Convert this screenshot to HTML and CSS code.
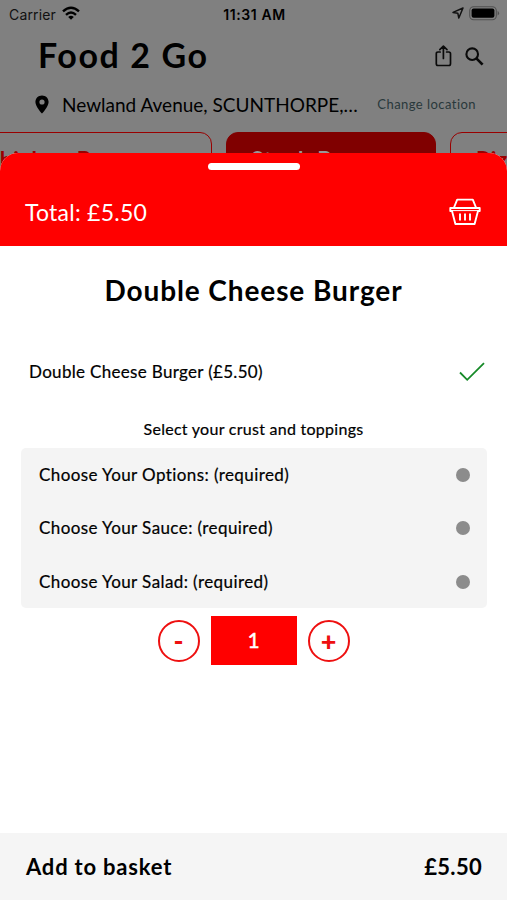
FILE: index.html
```html
<!DOCTYPE html>
<html lang="en">
<head>
<meta charset="utf-8">
<title>Food 2 Go</title>
<link rel="stylesheet" href="styles.css">
</head>
<body>
<div class="screen">
  <div class="backdrop">
    <div class="status">
      <div class="status-left"><span class="carrier">Carrier</span>
        <svg class="wifi" width="18" height="14" viewBox="0 0 18 14" fill="none" stroke="#000" stroke-width="2.4"><path d="M1 5.4Q9-1.9 17 5.4"/><path d="M4 8.8Q9 4.2 14 8.8"/><path d="M9 13.8 6.2 10.9Q9 8.8 11.8 10.9Z" fill="#000" stroke="none"/></svg>
      </div>
      <span class="time">11:31 AM</span>
      <div class="status-right">
        <svg width="12" height="12" viewBox="0 0 12 12" fill="none" stroke="#111" stroke-width="1.5" stroke-linejoin="round"><path d="M11 1 1 5.4 5.8 6.2 6.8 11Z"/></svg>
        <svg width="31" height="15" viewBox="0 0 31 15"><rect x=".7" y=".7" width="26.6" height="13" rx="4" fill="none" stroke="#505050" stroke-width="1.1"/><rect x="2.6" y="2.6" width="22.8" height="9.2" rx="2" fill="#000"/><path d="M28.6 4.8q3 2.4 0 4.8z" fill="#505050"/></svg>
      </div>
    </div>
    <div class="title-row">
      <h1>Food 2 Go</h1>
      <div class="actions">
        <svg width="17" height="22" viewBox="0 0 17 22" fill="none" stroke="#0a0a0a" stroke-width="1.7" stroke-linecap="round" stroke-linejoin="round"><path d="M5.2 7H3Q1.3 7 1.3 8.7V18.8Q1.3 20.5 3 20.5H13.8Q15.5 20.5 15.5 18.8V8.7Q15.5 7 13.8 7H11.6M8.4 13.5V1.4M4.8 4.6 8.4 1.2 12 4.6"/></svg>
        <svg width="19" height="19" viewBox="0 0 19 19" fill="none" stroke="#0a0a0a"><circle cx="7.2" cy="7.2" r="5.8" stroke-width="2.1"/><path d="M11.4 11.4 17.6 17.6" stroke-width="2.7"/></svg>
      </div>
    </div>
    <div class="location">
      <svg width="14" height="19" viewBox="0 0 14 19"><path fill="#000" fill-rule="evenodd" d="M7 .4C3.2.4.4 3.2.4 6.9.4 11.5 7 18.5 7 18.5S13.6 11.5 13.6 6.9C13.6 3.2 10.8.4 7 .4ZM7 4.4a2.6 2.6 0 1 1 0 5.2 2.6 2.6 0 0 1 0-5.2Z"/></svg>
      <span class="address">Newland Avenue, SCUNTHORPE,…</span>
      <span class="change">Change location</span>
    </div>
    <div class="tabs">
      <div class="tab tab-first">Chicken Burgers</div>
      <div class="tab tab-active">Steak Burgers</div>
      <div class="tab tab-last">Pizzas</div>
    </div>
  </div>
  <main class="sheet">
    <header class="sheet-head">
      <div class="grabber"></div>
      <div class="total-row">
        <span class="total">Total: £5.50</span>
        <svg width="32" height="28" viewBox="0 0 32 28" fill="none" stroke="#fff" stroke-width="1.9" stroke-linejoin="round"><path d="M5 9.5 8.2 1.6H23.8L27 9.5"/><path d="M1.3 10H30.7V13H29L25.6 26H6.4L3 13H1.3Z"/><path d="M3 12.6H29" stroke-width="1"/><path d="M11 15.5V22.5M16 15.5V22.5M21 15.5V22.5"/></svg>
      </div>
    </header>
    <h2>Double Cheese Burger</h2>
    <div class="variant"><span class="t-variant">Double Cheese Burger (£5.50)</span>
      <svg width="26" height="20" viewBox="0 0 26 20" fill="none" stroke="#168a28" stroke-width="1.8"><path d="M1 10.5 8.2 17.8 25 1.2"/></svg>
    </div>
    <p class="hint"><span class="t-hint">Select your crust and toppings</span></p>
    <div class="options">
      <div class="option"><span class="t-opt">Choose Your Options: (required)</span><i class="dot"></i></div>
      <div class="option"><span class="t-opt">Choose Your Sauce: (required)</span><i class="dot"></i></div>
      <div class="option"><span class="t-opt">Choose Your Salad: (required)</span><i class="dot"></i></div>
    </div>
    <div class="stepper">
      <button class="round">-</button>
      <div class="qty">1</div>
      <button class="round">+</button>
    </div>
    <footer class="basket"><span class="add">Add to basket</span><span class="price">£5.50</span></footer>
  </main>
</div>
</body>
</html>
```
FILE: styles.css
```css
* { box-sizing: border-box; }
body { margin: 0; font-family: Lato, "Liberation Sans", sans-serif; color: #000; }
h1, h2, p { margin: 0; }
svg { display: block; flex: none; }
span, h1, h2 { white-space: nowrap; }
.screen { width: 507px; height: 900px; overflow: hidden; background: #808080; display: flex; flex-direction: column; }
.backdrop { height: 153px; flex: none; }
.status { height: 28px; display: grid; grid-template-columns: 1fr auto 1fr; align-items: center; padding: 0 7px 0 9px; font-family: Inter, sans-serif; font-size: 14px; }
.status-left { display: flex; align-items: center; gap: 6px; }
.wifi { margin-top: -2px; }
.carrier { color: #111; letter-spacing: .15px; }
.time { font-weight: 600; letter-spacing: .6px; }
.status-right { display: flex; justify-content: flex-end; align-items: center; gap: 5px; margin-top: -2px; }
.title-row { height: 56px; display: flex; justify-content: space-between; padding: 0 23px 0 38px; align-items: center; }
h1 { font-size: 34px; font-weight: 700; letter-spacing: 1.6px; line-height: 40px; margin-top: -2px; }
.actions { display: flex; align-items: center; gap: 13px; }
.location { height: 40px; display: flex; align-items: center; padding: 0 31px 0 35px; }
.address { font-size: 19px; margin-left: 13px; }
.change { font-size: 13px; letter-spacing: .45px; margin-left: auto; color: #29383b; }
.tabs { margin-top: 8px; display: flex; gap: 14px; margin-left: -60px; width: 700px; }
.tab { height: 52px; flex: none; border: 1.5px solid #900; border-radius: 12px; color: #900; font-size: 22px; font-weight: 700; letter-spacing: 1.1px; line-height: 54px; text-align: left; white-space: nowrap; }
.tab-first { width: 272px; padding-left: 43px; }
.tab-active { width: 210px; background: #800000; border-color: #800000; color: #999; padding-left: 24px; }
.tab-last { width: 140px; padding-left: 25px; }
.sheet { position: relative; flex: 1; background: #fff; border-radius: 18px 18px 0 0; overflow: hidden; display: flex; flex-direction: column; }
.sheet-head { height: 93px; background: #f00; padding-top: 10px; flex: none; }
.grabber { width: 92px; height: 7px; border-radius: 4px; background: #fff; margin: 0 auto; }
.total-row { display: flex; justify-content: space-between; align-items: center; height: 84px; padding: 0 26px 0 25px; color: #fff; }
.total { font-size: 23px; letter-spacing: .25px; margin-top: -1px; }
h2 { text-align: center; font-size: 28px; line-height: 36px; margin-top: 26px; letter-spacing: .9px; }
.variant { display: flex; justify-content: space-between; align-items: center; height: 40px; margin: 44px 22px 0 29px; font-size: 17px; }
.t-variant, .t-opt, .t-hint { -webkit-text-stroke: .2px #000; }
.t-variant { letter-spacing: .32px; margin-top: -1px; }
.t-opt { letter-spacing: .41px; margin-top: -1px; }
.hint { text-align: center; font-size: 16px; line-height: 24px; margin-top: 25px; }
.t-hint { letter-spacing: .27px; }
.options { margin: 7px 20px 0 21px; height: 160px; background: #f4f4f4; border-radius: 5px; flex: none; }
.option { height: 53.6px; display: flex; justify-content: space-between; align-items: center; padding: 0 17px 0 18px; font-size: 17px; }
.dot { width: 14px; height: 14px; border-radius: 50%; background: #8c8c8c; }
.stepper { display: flex; justify-content: center; align-items: center; gap: 11px; margin-top: 8px; height: 49px; flex: none; }
.round { width: 42px; height: 42px; border: 2px solid #ee1010; border-radius: 50%; background: #fff; color: #ee1010; font: 900 27px/36px Lato, sans-serif; padding: 0; }
.qty { width: 86px; height: 49px; background: #f00; color: #fff; font-size: 21px; text-align: center; line-height: 47px; -webkit-text-stroke: .4px #fff; }
.basket { margin-top: auto; height: 67px; background: #f5f5f5; display: flex; justify-content: space-between; align-items: center; padding: 0 25px 1px 26px; font-size: 22px; font-weight: 700; }
.add { letter-spacing: .8px; }
.price { letter-spacing: .3px; }
```
